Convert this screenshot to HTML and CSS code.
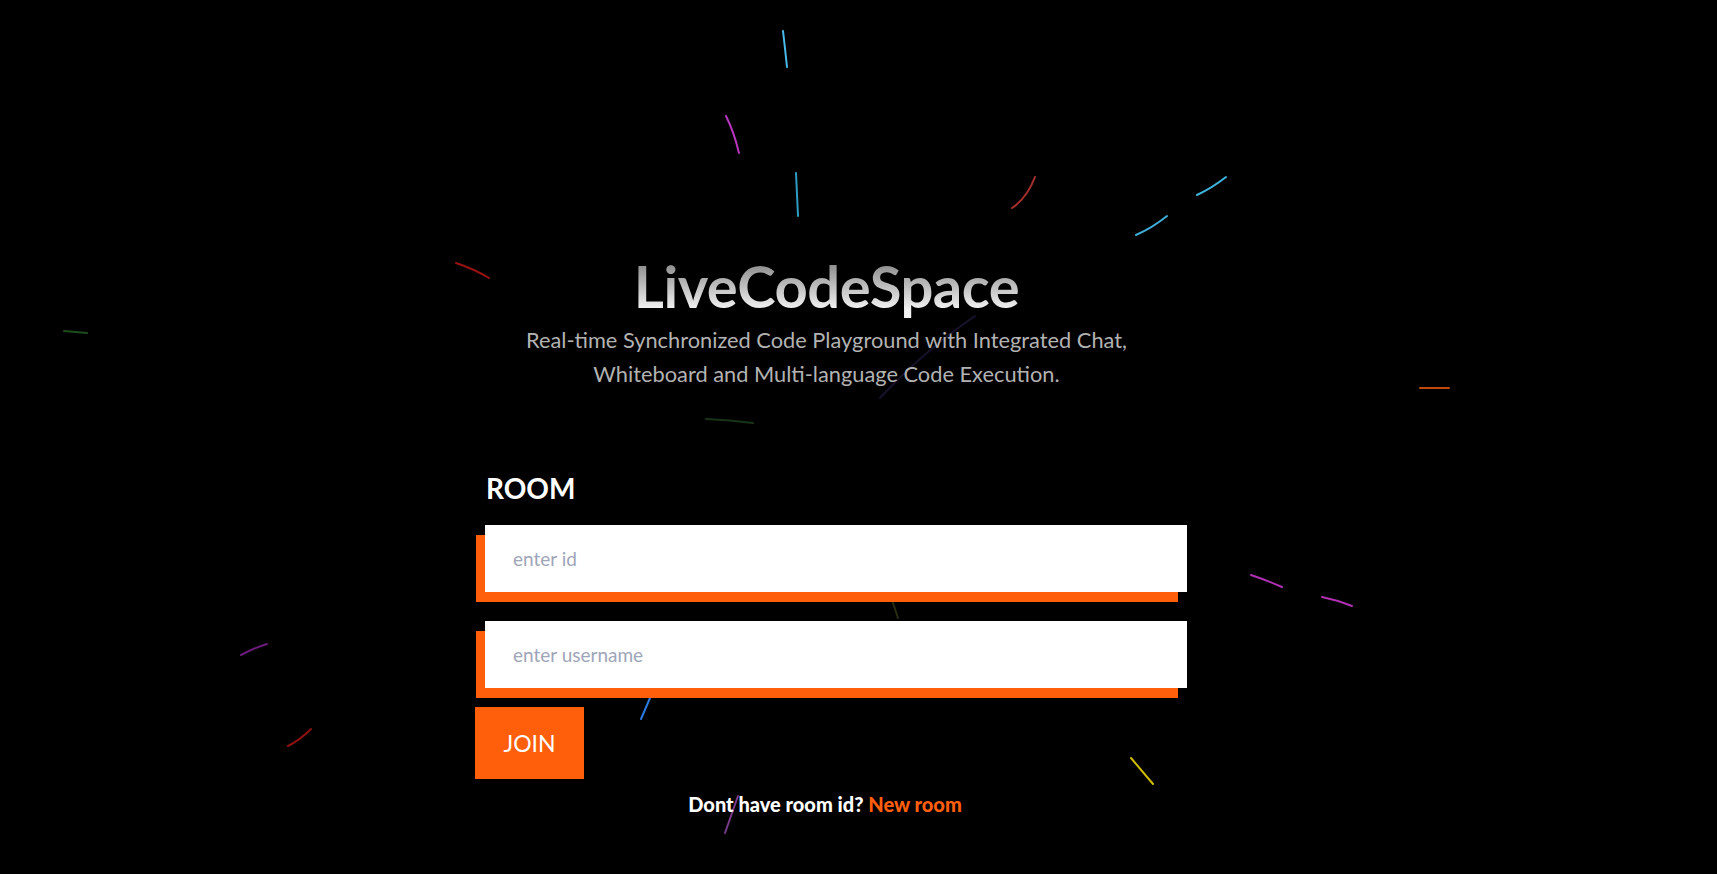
FILE: index.html
```html
<!DOCTYPE html>
<html lang="en">
<head>
<meta charset="utf-8">
<title>LiveCodeSpace</title>
<link rel="stylesheet" href="styles.css">
</head>
<body>
<div class="stage">
  <svg class="streaks" viewBox="0 0 1717 874" width="1717" height="874" aria-hidden="true">
    <g fill="none" stroke-width="2" stroke-linecap="round">
      <path d="M783 31 Q785 48 787 67" stroke="#4ab8e8"/>
      <path d="M726 116 Q734 132 739 153" stroke="#b835c0"/>
      <path d="M796 173 Q797 194 798 216" stroke="#2f9cc6"/>
      <path d="M1035 177 Q1027 198 1012 208" stroke="#a8302c"/>
      <path d="M1226 177 Q1212 188 1197 195" stroke="#3eb4de"/>
      <path d="M1167 216 Q1152 228 1136 235" stroke="#3eaed8"/>
      <path d="M456 263 Q474 269 489 278" stroke="#9a1212"/>
      <path d="M64 331 L87 333" stroke="#1d4d1d"/>
      <path d="M975 316 Q925 350 880 398" stroke="#18122c"/>
      <path d="M1420 388 L1449 388" stroke="#c04a0a"/>
      <path d="M706 419 Q730 420 753 423" stroke="#183418"/>
      <path d="M892 600 L898 618" stroke="#2a2c12"/>
      <path d="M1251 575 Q1266 580 1282 587" stroke="#b030b4"/>
      <path d="M1322 597 Q1337 600 1352 606" stroke="#b030b4"/>
      <path d="M241 655 Q254 648 267 644" stroke="#6a1a7a"/>
      <path d="M641 719 L650 698" stroke="#2a7ae0"/>
      <path d="M288 746 Q300 740 311 729" stroke="#8c1212"/>
      <path d="M1131 758 L1153 784" stroke="#d0bc00"/>
      <path d="M738 796 L725 833" stroke="#7a3a8a"/>
    </g>
  </svg>

  <main class="column">
    <header class="hero">
      <h1 class="title">LiveCodeSpace</h1>
      <p class="tagline">Real-time Synchronized Code Playground with Integrated Chat,<br>Whiteboard and Multi-language Code Execution.</p>
    </header>

    <form class="room-form" onsubmit="return false">
      <h2 class="room-label">ROOM</h2>
      <input class="field" type="text" placeholder="enter id">
      <input class="field" type="text" placeholder="enter username">
      <button class="join" type="button">JOIN</button>
      <p class="hint">Dont have room id? <a class="new-room" href="#">New room</a></p>
    </form>
  </main>
</div>
</body>
</html>
```
FILE: styles.css
```css
* { box-sizing: border-box; }

html, body {
  margin: 0;
  padding: 0;
  background: #000;
  height: 100%;
  overflow: hidden;
}

body {
  font-family: "Lato", "Open Sans", sans-serif;
  color: #fff;
}

.stage {
  position: relative;
  min-height: 100vh;
  display: flex;
  justify-content: center;
  padding-right: 55px;
}

.streaks {
  position: absolute;
  left: 0;
  top: 0;
  pointer-events: none;
}

.column {
  position: relative;
  width: 712px;
  display: flex;
  flex-direction: column;
}

.hero {
  text-align: center;
  padding-top: 253px;
  padding-right: 9px;
}

.title {
  margin: 0;
  font-size: 58px;
  line-height: 66px;
  font-weight: 700;
  letter-spacing: -0.5px;
  background: linear-gradient(to bottom, #8a8a8a 15%, #f2f2f2 85%);
  -webkit-background-clip: text;
  background-clip: text;
  color: transparent;
  display: inline-block;
}

.tagline {
  margin: 4px 0 0;
  font-size: 21.8px;
  line-height: 34px;
  color: #b2b2b2;
}

.room-form {
  display: flex;
  flex-direction: column;
  align-items: flex-start;
  margin-top: 81px;
}

.room-label {
  margin: 0 0 21px 11px;
  font-size: 28px;
  line-height: 32px;
  font-weight: 700;
  color: #fff;
}

.field {
  margin-left: 10px;
  width: 702px;
  height: 67px;
  border: 0;
  outline: 0;
  background: #fff;
  padding: 0 28px;
  font-family: inherit;
  font-size: 19px;
  color: #333;
  box-shadow: -9px 10px 0 #ff5e0a;
  margin-bottom: 29px;
}

.field::placeholder {
  color: #9ea5b8;
}

.field + .field {
  margin-bottom: 19px;
}

.join {
  width: 109px;
  height: 72px;
  border: 0;
  background: #ff5e0a;
  color: #fff;
  font-family: inherit;
  font-size: 23px;
  font-weight: 400;
  cursor: pointer;
}

.hint {
  align-self: stretch;
  text-align: center;
  margin: 13px 0 0;
  padding-right: 12px;
  font-size: 20px;
  font-weight: 900;
  color: #fff;
}

.new-room {
  color: #ff5e0a;
  text-decoration: none;
}
```
